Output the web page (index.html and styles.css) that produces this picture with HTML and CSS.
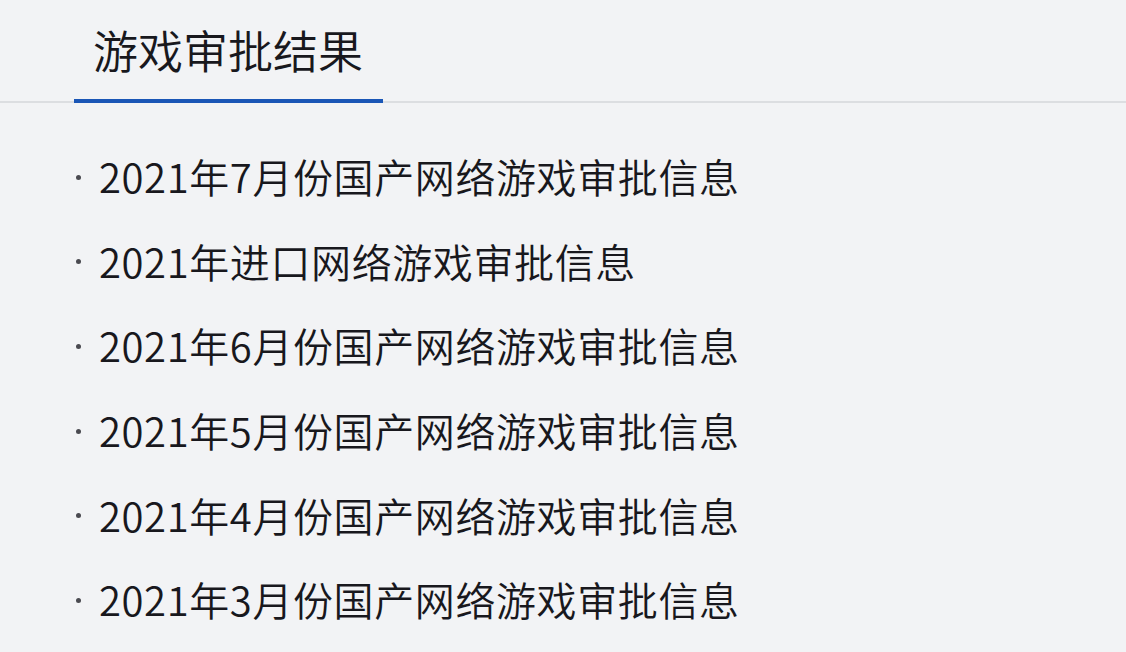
FILE: index.html
```html
<!DOCTYPE html>
<html lang="zh-CN">
<head>
    <meta charset="UTF-8">
    <meta name="viewport" content="width=device-width, initial-scale=1.0">
    <title>游戏审批结果</title>
    <link rel="stylesheet" href="styles.css">
</head>
<body>
    <div class="panel">
        <div class="tabs">
            <div class="tab act">游戏审批结果</div>
        </div>
        <ul class="list">
            <li><a href="#">2021年7月份国产网络游戏审批信息</a></li>
            <li><a href="#">2021年进口网络游戏审批信息</a></li>
            <li><a href="#">2021年6月份国产网络游戏审批信息</a></li>
            <li><a href="#">2021年5月份国产网络游戏审批信息</a></li>
            <li><a href="#">2021年4月份国产网络游戏审批信息</a></li>
            <li><a href="#">2021年3月份国产网络游戏审批信息</a></li>
        </ul>
    </div>
</body>
</html>
```

FILE: styles.css
```css
*{
    margin: 0;
    padding: 0;
    box-sizing: border-box;
}
body{
    background-color: #f2f3f5;
    color: #18181d;
    font-family: "Noto Sans CJK SC", "Noto Sans", sans-serif;
}
.panel{
    width: 1126px;
    height: 652px;
    overflow: hidden;
}
.tabs{
    display: flex;
    padding-left: 74px;
    border-bottom: 2px solid #dcdee1;
}
.tab{
    padding: 0 20px 0 19px;
    font-size: 45px;
    font-weight: 350;
    line-height: 99px;
    border-bottom: 4px solid #1a56b6;
    margin-bottom: -2px;
}
.list{
    list-style: none;
    padding: 31px 0 0 74px;
}
.list li{
    display: flex;
    align-items: center;
    height: 84.6px;
    font-size: 40px;
    font-weight: 350;
    letter-spacing: 0.6px;
}
/* 小圆点 */
.list li::before{
    content: "";
    flex: none;
    width: 5px;
    height: 5px;
    border-radius: 50%;
    background-color: #4a4a50;
    margin: 2px 18px 0 2px;
}
.list a{
    color: #18181d;
    text-decoration: none;
}
```
